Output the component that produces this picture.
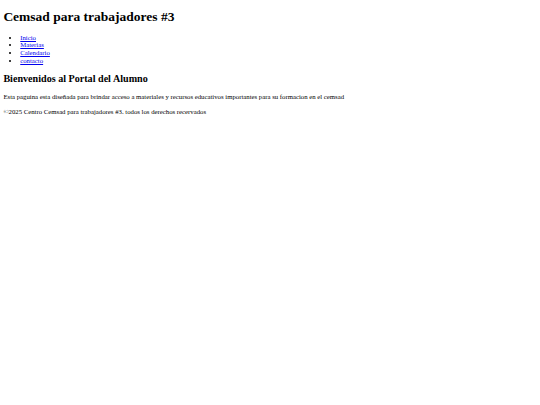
import React from 'react';

const links = ['Inicio', 'Materias', 'Calendario', 'contacto'];

const App: React.FC = () => {
  return (
    <div className="m-[3.375px] font-['Liberation_Serif',serif] text-[6.75px] leading-[7.76px] text-black">
      <header>
        <h1 className="my-[9.05px] text-[13.5px] leading-[15.53px] font-bold">Cemsad para trabajadores #3</h1>
        <nav>
          <ul className="my-[6.75px] list-disc pl-[16.875px]">
            {links.map(link => (
              <li key={link}>
                <a href="#" className="text-[#0000ee] underline">{link}</a>
              </li>
            ))}
          </ul>
        </nav>
      </header>
      <main>
        <h2 className="my-[8.4px] text-[10.125px] leading-[11.64px] font-bold">Bienvenidos al Portal del Alumno</h2>
        <p className="my-[6.75px]">
          Esta paguina esta diseñada para brindar acceso a materiales y recursos educativos importantes para su formacion en el cemsad
        </p>
      </main>
      <footer>
        <p className="my-[6.75px]">©2025 Centro Cemsad para trabajadores #3. todos los derechos recervados</p>
      </footer>
    </div>
  );
};

export default App;
